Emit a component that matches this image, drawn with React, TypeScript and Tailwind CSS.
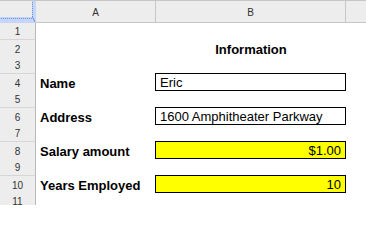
import type { ReactNode } from "react"

const font = { fontFamily: '"Liberation Sans", Arial, sans-serif' }

type Row = {
  n: number
  label?: string
  value?: string
  kind?: "plain" | "money"
  title?: string
}

const rows: Row[] = [
  { n: 1 },
  { n: 2, title: "Information" },
  { n: 3 },
  { n: 4, label: "Name", value: "Eric", kind: "plain" },
  { n: 5 },
  { n: 6, label: "Address", value: "1600 Amphitheater Parkway", kind: "plain" },
  { n: 7 },
  { n: 8, label: "Salary amount", value: "$1.00", kind: "money" },
  { n: 9 },
  { n: 10, label: "Years Employed", value: "10", kind: "money" },
  { n: 11 },
]

function Corner() {
  // freeze-pane handle in the top-left corner
  return (
    <svg width="36" height="22" viewBox="0 0 36 22" className="block">
      <rect x="0" y="16" width="36" height="6" fill="#c6d6f6" />
      <rect x="32" y="0" width="4" height="22" fill="#c6d6f6" />
      <line x1="1" y1="17.5" x2="32" y2="17.5" stroke="#6b8fe6" strokeDasharray="1 1" />
      <line x1="32.5" y1="1" x2="32.5" y2="16" stroke="#6b8fe6" strokeDasharray="1 1" />
      <line x1="32.5" y1="16" x2="35" y2="21" stroke="#6b8fe6" />
    </svg>
  )
}

function Box({ children, kind }: { children: ReactNode; kind: "plain" | "money" }) {
  return (
    <div
      className={
        kind === "money"
          ? "-ml-px -mt-px flex h-[18px] w-[191px] items-center justify-end border border-black bg-[#ffff00] pr-[4px] text-[13px] font-normal leading-none text-black"
          : "-ml-px -mt-px flex h-[18px] w-[191px] items-center border border-black bg-white pl-[4px] text-[13px] font-normal leading-none text-black"
      }
    >
      {children}
    </div>
  )
}

export default function App() {
  return (
    <div className="h-[205px] w-[366px] overflow-hidden border-t border-[#c6c6c6] bg-white" style={font}>
      <div className="grid h-[22px] grid-cols-[36px_120px_190px_1fr] border-b border-[#c6c6c6] bg-[#ededed] text-[10px] text-[#333]">
        <div className="border-r border-[#b8b8b8]">
          <Corner />
        </div>
        <div className="flex items-center justify-center border-r border-[#c6c6c6]">A</div>
        <div className="flex items-center justify-center border-r border-[#c6c6c6]">B</div>
        <div />
      </div>
      {rows.map((r) => (
        <div key={r.n} className="grid h-[17px] grid-cols-[36px_120px_190px_1fr]">
          <div className="flex items-center justify-center border-r border-b border-r-[#b8b8b8] border-b-[#d6d6d6] bg-[#ededed] text-[10px] text-[#333]">
            {r.n}
          </div>
          <div className="flex items-center pl-[4px] text-[13px] font-bold text-black">
            {r.label}
          </div>
          {r.value && r.kind ? (
            <div className="relative z-10">
              <Box kind={r.kind}>{r.value}</Box>
            </div>
          ) : (
            <div className="flex items-center justify-center text-[13px] font-bold text-black">
              {r.title}
            </div>
          )}
          <div />
        </div>
      ))}
    </div>
  )
}
